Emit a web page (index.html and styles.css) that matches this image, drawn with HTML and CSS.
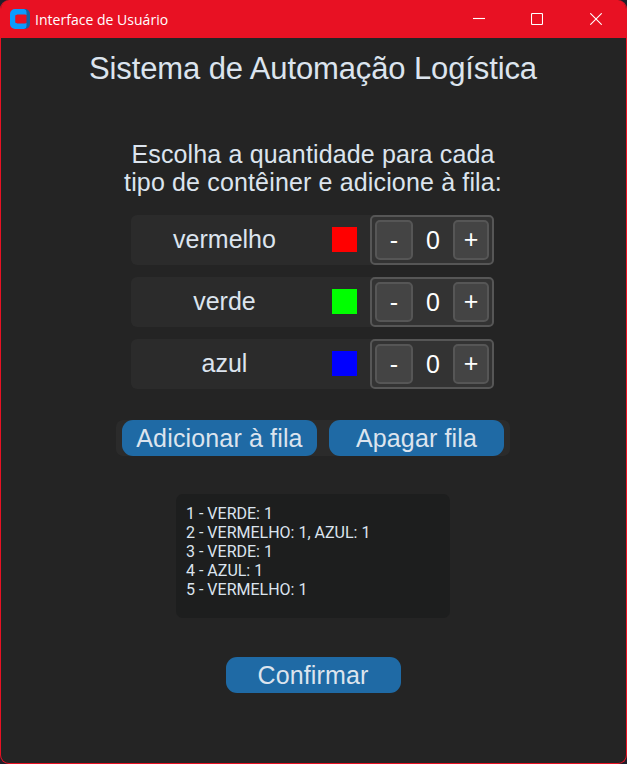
FILE: index.html
```html
<!DOCTYPE html>
<html lang="pt-BR">
<head>
<meta charset="utf-8">
<title>Interface de Usuário</title>
<link rel="stylesheet" href="styles.css">
</head>
<body>
<div class="window">
  <header class="titlebar">
    <svg class="logo" width="20" height="20" viewBox="0 0 20 20">
      <path fill="#1462a0" d="M13 0h2a5 5 0 0 1 5 5v10a5 5 0 0 1-5 5h-2z"/>
      <path fill="#0a9bff" d="M5 0h9a3 3 0 0 1 2.500 3v3h-11v8h11v3a3 3 0 0 1-2.500 3H5a5 5 0 0 1-5-5V5a5 5 0 0 1 5-5z"/>
      <path fill="#e81123" d="M7 5.500H15.500l1 1v7l-1 1H7L5.500 13V7z"/>
    </svg>
    <span class="caption">Interface de Usuário</span>
    <div class="controls">
      <svg width="12" height="12" viewBox="0 0 12 12"><path d="M0 5.500h12"/></svg>
      <svg width="12" height="12" viewBox="0 0 12 12"><rect x=".5" y=".5" width="11" height="11" rx="1"/></svg>
      <svg width="12" height="12" viewBox="0 0 12 12"><path d="M.3.300l11.400 11.400M11.700.300L.3 11.700"/></svg>
    </div>
  </header>
  <main class="content">
    <h1 class="title">Sistema de Automação Logística</h1>
    <p class="prompt">Escolha a quantidade para cada<br>tipo de contêiner e adicione à fila:</p>
    <div class="rows">
      <div class="row"><span class="label">vermelho</span><i class="swatch red"></i><div class="stepper"><button class="minus">-</button><span class="value">0</span><button class="plus">+</button></div></div>
      <div class="row"><span class="label">verde</span><i class="swatch green"></i><div class="stepper"><button class="minus">-</button><span class="value">0</span><button class="plus">+</button></div></div>
      <div class="row"><span class="label">azul</span><i class="swatch blue"></i><div class="stepper"><button class="minus">-</button><span class="value">0</span><button class="plus">+</button></div></div>
    </div>
    <div class="actions">
      <button class="action wide">Adicionar à fila</button>
      <button class="action">Apagar fila</button>
    </div>
    <div class="queue">
      <div>1 - VERDE: 1</div>
      <div>2 - VERMELHO: 1, AZUL: 1</div>
      <div>3 - VERDE: 1</div>
      <div>4 - AZUL: 1</div>
      <div>5 - VERMELHO: 1</div>
    </div>
    <button class="action confirm">Confirmar</button>
  </main>
</div>
</body>
</html>
```
FILE: styles.css
```css
* { box-sizing: border-box; }
body { margin: 0; background: #20202b; font-family: "Liberation Sans", Arial, sans-serif; color: #dce4ee; }
button { border: 0; padding: 0; margin: 0; font: inherit; color: inherit; }
.window { width: 627px; height: 764px; border: 1px solid #e81123; border-top: 0; border-radius: 9px; background: #242424; overflow: hidden; }
.titlebar { height: 38px; background: #e81123; display: flex; align-items: center; padding-left: 9px; color: #fff; }
.logo { display: block; }
.caption { margin-left: 5px; font: 14px/20px "Open Sans", "Noto Sans", sans-serif; letter-spacing: 0.02px; padding-top: 1px; }
.controls { margin-left: auto; display: flex; gap: 46px; padding-right: 24px; }
.controls svg { display: block; fill: none; stroke: #fff; stroke-width: 1.1; }
.controls svg:not(:last-child) { margin-left: -1px; margin-right: 1px; }
.content { display: flex; flex-direction: column; align-items: center; padding-right: 1px; }
.title { margin: 13px 0 0; font-size: 31px; line-height: 36px; font-weight: 400; letter-spacing: -0.12px; white-space: nowrap; }
.prompt { margin: 53px 0 0; font-size: 25px; line-height: 28px; letter-spacing: 0.15px; text-align: center; white-space: nowrap; }
.rows { margin: 19px 1px 0 0; display: grid; gap: 12px; }
.row { display: flex; align-items: center; width: 363px; height: 50px; background: #2b2b2b; border-radius: 6px; font-size: 25px; }
.label { width: 187px; text-align: center; padding-bottom: 1px; }
.swatch { width: 25px; height: 25px; margin: 0 13px 1px 14px; }
.red { background: #f00; }
.green { background: #0f0; }
.blue { background: #00f; }
.stepper { width: 124px; height: 50px; border: 2px solid #565656; border-radius: 5px; background: #333; color: #fff; padding: 3px; display: flex; }
.minus, .plus { height: 40px; border: 2px solid #565656; border-radius: 5px; background: #444; line-height: 34px; }
.minus { width: 38px; }
.plus { width: 36px; padding-bottom: 2px; }
.value { width: 40px; text-align: center; line-height: 40px; }
.actions { margin-top: 31px; width: 394px; height: 36px; border-radius: 7px; background: #2b2b2b; display: flex; gap: 12px; padding: 0 6px; }
.action { width: 175px; height: 36px; border-radius: 11px; background: #1f6aa5; font-size: 25px; line-height: 36px; letter-spacing: 0.15px; text-align: center; white-space: nowrap; }
.wide { width: 195px; }
.queue { margin-top: 38px; width: 274px; height: 124px; padding: 10px; border-radius: 7px; background: #1d1e1e; font: 16px/19px Roboto, sans-serif; }
.confirm { margin-top: 39px; }
```
